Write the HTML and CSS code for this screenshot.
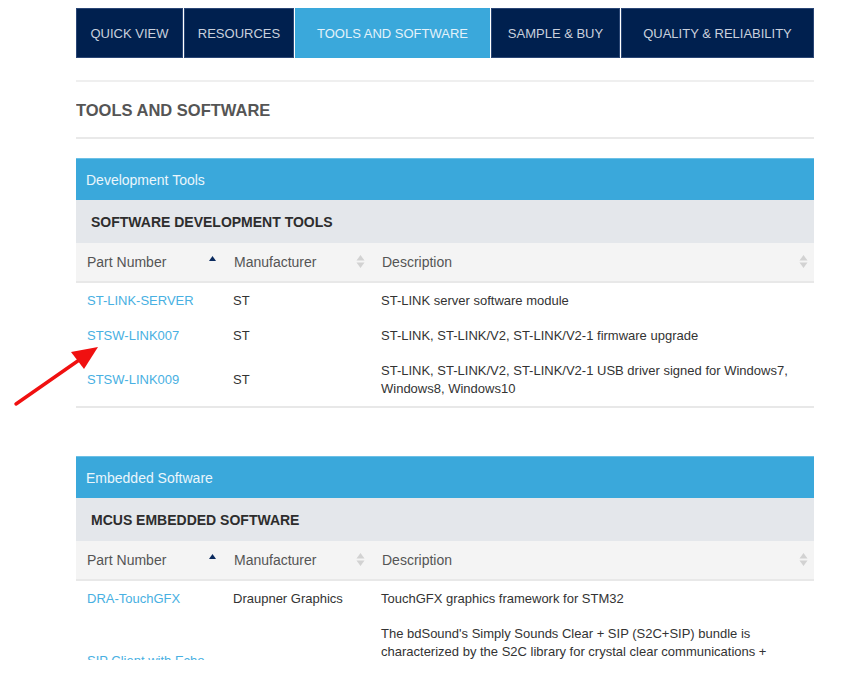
FILE: index.html
```html
<!DOCTYPE html>
<html>
<head>
<meta charset="utf-8">
<title>Tools and Software</title>
<link rel="stylesheet" href="styles.css">
</head>
<body>
<div class="page">
  <nav class="tabs">
    <a class="tab">QUICK VIEW</a>
    <a class="tab">RESOURCES</a>
    <a class="tab active">TOOLS AND SOFTWARE</a>
    <a class="tab">SAMPLE &amp; BUY</a>
    <a class="tab">QUALITY &amp; RELIABILITY</a>
  </nav>

  <div class="title-block">
    <h2 class="title">TOOLS AND SOFTWARE</h2>
  </div>

  <section class="group">
    <div class="group-head">Development Tools</div>
    <div class="sub-head">SOFTWARE DEVELOPMENT TOOLS</div>
    <table class="grid">
      <colgroup><col class="c1"><col class="c2"><col class="c3"></colgroup>
      <thead>
        <tr>
          <th><div class="th-in"><span>Part Number</span><svg class="sort" width="9" height="15" viewBox="0 0 9 15"><path d="M1 7 L4.5 2 L8 7 Z" fill="#0a2a5e"/></svg></div></th>
          <th><div class="th-in"><span>Manufacturer</span><svg class="sort" width="9" height="15" viewBox="0 0 9 15"><path d="M0.5 6.5 L4.5 1 L8.5 6.5 Z M0.5 8.5 L4.5 14 L8.5 8.5 Z" fill="#d2d2d2"/></svg></div></th>
          <th><div class="th-in"><span>Description</span><svg class="sort" width="9" height="15" viewBox="0 0 9 15"><path d="M0.5 6.5 L4.5 1 L8.5 6.5 Z M0.5 8.5 L4.5 14 L8.5 8.5 Z" fill="#d2d2d2"/></svg></div></th>
        </tr>
      </thead>
      <tbody>
        <tr><td><a class="part">ST-LINK-SERVER</a></td><td>ST</td><td>ST-LINK server software module</td></tr>
        <tr><td><a class="part">STSW-LINK007</a></td><td>ST</td><td>ST-LINK, ST-LINK/V2, ST-LINK/V2-1 firmware upgrade</td></tr>
        <tr><td><a class="part">STSW-LINK009</a></td><td>ST</td><td>ST-LINK, ST-LINK/V2, ST-LINK/V2-1 USB driver signed for Windows7, Windows8, Windows10</td></tr>
      </tbody>
    </table>
  </section>

  <section class="group second">
    <div class="group-head">Embedded Software</div>
    <div class="sub-head">MCUS EMBEDDED SOFTWARE</div>
    <table class="grid">
      <colgroup><col class="c1"><col class="c2"><col class="c3"></colgroup>
      <thead>
        <tr>
          <th><div class="th-in"><span>Part Number</span><svg class="sort" width="9" height="15" viewBox="0 0 9 15"><path d="M1 7 L4.5 2 L8 7 Z" fill="#0a2a5e"/></svg></div></th>
          <th><div class="th-in"><span>Manufacturer</span><svg class="sort" width="9" height="15" viewBox="0 0 9 15"><path d="M0.5 6.5 L4.5 1 L8.5 6.5 Z M0.5 8.5 L4.5 14 L8.5 8.5 Z" fill="#d2d2d2"/></svg></div></th>
          <th><div class="th-in"><span>Description</span><svg class="sort" width="9" height="15" viewBox="0 0 9 15"><path d="M0.5 6.5 L4.5 1 L8.5 6.5 Z M0.5 8.5 L4.5 14 L8.5 8.5 Z" fill="#d2d2d2"/></svg></div></th>
        </tr>
      </thead>
      <tbody>
        <tr><td><a class="part">DRA-TouchGFX</a></td><td>Draupner Graphics</td><td>TouchGFX graphics framework for STM32</td></tr>
        <tr><td><a class="part">SIP Client with Echo Cancellation</a></td><td>bdSound</td><td>The bdSound's Simply Sounds Clear + SIP (S2C+SIP) bundle is characterized by the S2C library for crystal clear communications + bdSound's SIP client, featuring acoustic echo cancellation, noise reduction and automatic gain control for an enhanced hands-free voice experience on STM32.</td></tr>
      </tbody>
    </table>
  </section>
</div>

<svg class="annot" width="843" height="673" viewBox="0 0 843 673">
  <line x1="16" y1="404" x2="82" y2="358" stroke="#f01010" stroke-width="3.4" stroke-linecap="round"/>
  <path d="M98 347 L71 352 L84 369 Z" fill="#f01010"/>
</svg>
</body>
</html>
```

FILE: styles.css
```css
html, body {
  margin: 0;
  padding: 0;
  background: #ffffff;
}

body {
  font-family: "Liberation Sans", Arial, sans-serif;
  color: #333;
  position: relative;
}

.page {
  width: 738px;
  margin-left: 76px;
  padding-top: 8px;
  height: 652px;
  overflow: hidden;
}

.tabs {
  display: grid;
  grid-template-columns: 107px 110px 195px 129px 193px;
  column-gap: 1px;
  height: 50px;
}

.tab {
  display: flex;
  align-items: center;
  justify-content: center;
  background: #00204f;
  color: #c9d0dd;
  font-size: 13px;
  box-shadow: inset 0 0 0 1px #2a4675;
}

.tab.active {
  background: #3aa8db;
  color: #e3f2fa;
  box-shadow: none;
}

.title-block {
  margin-top: 22px;
  border-top: 2px solid #efefef;
  border-bottom: 2px solid #e9e9e9;
  height: 55px;
  display: flex;
  align-items: center;
}

.title {
  margin: 0;
  font-size: 16.5px;
  font-weight: bold;
  color: #555;
  padding-top: 1px;
}

.group {
  margin-top: 19px;
}

.group.second {
  margin-top: 48px;
}

.group-head {
  height: 42px;
  background: #3aa8db;
  color: #eaf6fc;
  font-size: 14px;
  display: flex;
  align-items: center;
  padding-left: 10px;
  padding-top: 1px;
  border-top: 1px solid #6cc0e6;
  box-sizing: border-box;
}

.sub-head {
  height: 43px;
  background: #e4e7eb;
  color: #2d2d2d;
  font-size: 14px;
  font-weight: bold;
  display: flex;
  align-items: center;
  padding-left: 15px;
  padding-top: 1px;
  box-sizing: border-box;
}

.grid {
  width: 738px;
  border-collapse: collapse;
  table-layout: fixed;
}

.c1 { width: 147px; }
.c2 { width: 148px; }
.c3 { width: 443px; }

.grid th {
  background: #f4f4f4;
  height: 38px;
  padding: 0;
  font-weight: normal;
  font-size: 14px;
  color: #555;
  text-align: left;
  border-bottom: 2px solid #e8e8e8;
}

.th-in {
  display: flex;
  justify-content: space-between;
  align-items: center;
  padding: 0 6px 0 11px;
}

.sort {
  display: block;
  margin-top: -2px;
}

.grid td {
  font-size: 13px;
  line-height: 18px;
  padding: 8.5px 10px 8.5px 10px;
  vertical-align: middle;
  color: #333;
}

.grid td:first-child {
  padding-left: 11px;
}

.grid tbody tr:last-child td {
  border-bottom: 2px solid #e8e8e8;
}

.part {
  color: #48b0e2;
}

.annot {
  position: absolute;
  left: 0;
  top: 0;
  pointer-events: none;
}
```
